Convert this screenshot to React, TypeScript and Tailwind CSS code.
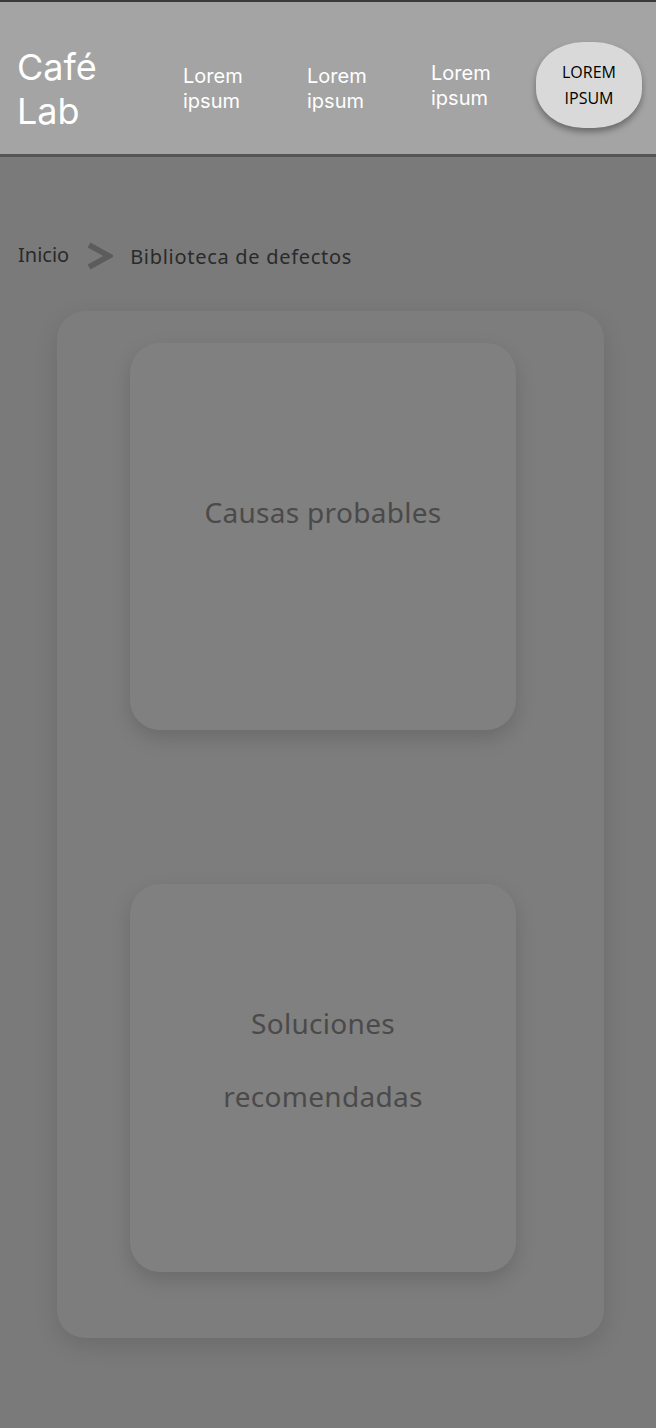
import React from "react";

export default function App() {
  return (
    <div className="min-h-[1428px] w-[656px] bg-[#7a7a7a]" style={{ fontFamily: "Inter, 'Noto Sans', sans-serif" }}>
      <header className="h-[157px] border-t-2 border-b-[3px] border-t-[#3a3a3a] border-b-[#555555] bg-[#a4a4a4] flex items-center">
        <div className="pl-[17px] w-[183px] text-white text-[36px] leading-[44px] font-normal mt-[22px]" style={{ fontFamily: "Inter, sans-serif" }}>
          Café<br />Lab
        </div>
        <div className="w-[124px] text-white text-[20px] leading-[25px] mt-[22px]">Lorem<br />ipsum</div>
        <div className="w-[124px] text-white text-[20px] leading-[25px] mt-[22px]">Lorem<br />ipsum</div>
        <div className="w-[105px] text-white text-[20px] leading-[25px] mt-[16px]">Lorem<br />ipsum</div>
        <button className="w-[106px] h-[86px] rounded-[45%] bg-[#d9d9d9] shadow-[0_4px_6px_rgba(0,0,0,0.35)] text-black text-[16px] leading-[26px] flex items-center justify-center text-center mt-[14px]" style={{ fontFamily: "'Open Sans', sans-serif" }}>
          LOREM<br />IPSUM
        </button>
      </header>

      <nav className="mt-[84px] flex items-center pl-[18px] h-[30px]" style={{ fontFamily: "'Noto Sans', Lato, sans-serif" }}>
        <span className="text-[20px] text-[#2a2a2a] -mt-[2px]">Inicio</span>
        <svg className="ml-[17px]" width="27" height="30" viewBox="0 0 27 30" fill="none">
          <path d="M3 4 L23 15 L3 26" stroke="#5c5c5c" strokeWidth="5.5" strokeLinejoin="miter" strokeLinecap="butt" />
        </svg>
        <span className="ml-[17px] text-[20px] tracking-[0.7px] text-[#2a2a2a] mt-[2px]">Biblioteca de defectos</span>
      </nav>

      <div className="mt-[40px] ml-[57px] w-[547px] h-[1027px] rounded-[28px] bg-[#7d7d7d] shadow-[0_8px_24px_rgba(0,0,0,0.12)] pt-[32px] flex flex-col items-center pr-[15px]">
        <div className="w-[386px] h-[387px] rounded-[30px] bg-[#808080] shadow-[0_8px_20px_rgba(0,0,0,0.15)] flex items-center justify-center pb-[50px]" style={{ fontFamily: "'Noto Sans', Lato, sans-serif" }}>
          <span className="text-[28px] tracking-[0.3px] text-[#4a4a4a]">Causas probables</span>
        </div>
        <div className="mt-[154px] w-[386px] h-[388px] rounded-[30px] bg-[#808080] shadow-[0_8px_20px_rgba(0,0,0,0.15)] flex items-center justify-center pb-[36px]" style={{ fontFamily: "'Noto Sans', Lato, sans-serif" }}>
          <span className="text-[28px] tracking-[0.3px] leading-[73px] text-[#4a4a4a] text-center">Soluciones<br />recomendadas</span>
        </div>
      </div>
    </div>
  );
}
